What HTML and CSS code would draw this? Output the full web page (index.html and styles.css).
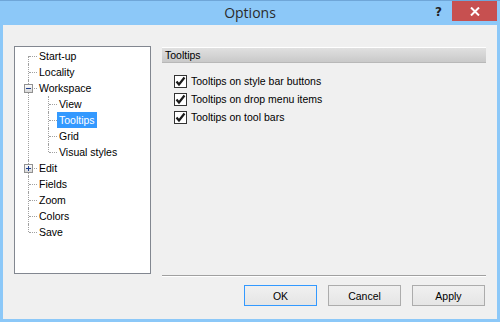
FILE: index.html
```html
<!DOCTYPE html>
<html lang="en">
<head>
<meta charset="UTF-8">
<title>Options</title>
<link rel="stylesheet" href="styles.css">
</head>
<body>
<div class="window">
    <div class="titlebar">
        <div class="spacer"></div>
        <div class="title">Options</div>
        <div class="controls">
            <span class="help">?</span>
            <span class="close">
                <svg width="10" height="9" viewBox="0 0 10 9"><path d="M1 0.5 L9 8.5 M9 0.5 L1 8.5" stroke="#fff" stroke-width="2"/></svg>
            </span>
        </div>
    </div>

    <div class="content">
        <!-- Category tree -->
        <div class="tree">
            <ul>
                <li><span class="label">Start-up</span></li>
                <li><span class="label">Locality</span></li>
                <li>
                    <span class="expander minus"></span>
                    <span class="label">Workspace</span>
                    <ul>
                        <li><span class="label">View</span></li>
                        <li><span class="label selected">Tooltips</span></li>
                        <li><span class="label">Grid</span></li>
                        <li><span class="label">Visual styles</span></li>
                    </ul>
                </li>
                <li>
                    <span class="expander plus"></span>
                    <span class="label">Edit</span>
                </li>
                <li><span class="label">Fields</span></li>
                <li><span class="label">Zoom</span></li>
                <li><span class="label">Colors</span></li>
                <li><span class="label">Save</span></li>
            </ul>
        </div>

        <div class="right">
            <div class="panel">
                <div class="panel-header">Tooltips</div>
                <div class="checks">
                    <label class="check"><span class="box"><svg width="11" height="11" viewBox="0 0 11 11"><path d="M1.5 5.5 L4 8.5 L9.5 1.5" fill="none" stroke="#1a1a1a" stroke-width="2.2"/></svg></span>Tooltips on style bar buttons</label>
                    <label class="check"><span class="box"><svg width="11" height="11" viewBox="0 0 11 11"><path d="M1.5 5.5 L4 8.5 L9.5 1.5" fill="none" stroke="#1a1a1a" stroke-width="2.2"/></svg></span>Tooltips on drop menu items</label>
                    <label class="check"><span class="box"><svg width="11" height="11" viewBox="0 0 11 11"><path d="M1.5 5.5 L4 8.5 L9.5 1.5" fill="none" stroke="#1a1a1a" stroke-width="2.2"/></svg></span>Tooltips on tool bars</label>
                </div>
            </div>
            <div class="separator"></div>
            <div class="buttons">
                <button class="default">OK</button>
                <button>Cancel</button>
                <button>Apply</button>
            </div>
        </div>
    </div>
</div>
</body>
</html>
```

FILE: styles.css
```css
body {
    margin: 0;
    background: #8cc8f8;
    font-family: 'Liberation Sans', Arial, sans-serif;
    font-size: 10.5px;
    color: #000;
}

.window {
    width: 500px;
    height: 322px;
    box-sizing: border-box;
    background: #8cc8f8;
    border-top: 1px solid #6fa6d8;
    padding: 0 3px 3px 3px;
}

.titlebar {
    height: 24px;
    display: flex;
    align-items: flex-start;
}

.spacer {
    width: 62px;
}

.title {
    flex: 1;
    text-align: center;
    font-family: 'Open Sans', sans-serif;
    font-size: 14px;
    line-height: 24px;
    color: #2b2b2b;
}

.controls {
    width: 62px;
    display: flex;
    align-items: flex-start;
}

.help {
    width: 17px;
    font-family: 'DejaVu Sans', sans-serif;
    font-weight: bold;
    font-size: 12px;
    line-height: 23px;
    color: #222;
}

.close {
    width: 45px;
    height: 20px;
    background: #c75050;
    display: flex;
    align-items: center;
    justify-content: center;
}

.content {
    height: 294px;
    box-sizing: border-box;
    background: #f0f0f0;
    padding: 21px 11px 0 11px;
    display: grid;
    grid-template-columns: 137px 1fr;
    column-gap: 11px;
    align-items: start;
}

/* tree view */
.tree {
    height: 228px;
    box-sizing: border-box;
    background: #fff;
    border: 1px solid #828790;
    padding-top: 1px;
}

.tree ul {
    list-style: none;
    margin: 0;
    padding: 0;
}

.tree li {
    position: relative;
    padding-left: 22px;
}

.tree li::before {
    content: '';
    position: absolute;
    left: 14px;
    top: 8px;
    width: 8px;
    border-top: 1px dotted #a0a0a0;
}

.tree li::after {
    content: '';
    position: absolute;
    left: 13px;
    top: 0;
    bottom: 0;
    border-left: 1px dotted #a0a0a0;
}

.tree > ul > li:first-child::after {
    top: 8px;
}

.tree li:last-child::after {
    bottom: auto;
    height: 8px;
}

.tree ul ul {
    margin-left: -2px;
}

.label {
    display: inline-block;
    height: 16px;
    line-height: 16px;
    padding: 0 2px;
}

.label.selected {
    background: #3399ff;
    color: #fff;
}

.expander {
    position: absolute;
    z-index: 1;
    left: 9px;
    top: 4px;
    width: 9px;
    height: 9px;
    box-sizing: border-box;
    border: 1px solid #919191;
    background: linear-gradient(#fcfcfc, #d8d8d8);
}

.expander::before {
    content: '';
    position: absolute;
    left: 1px;
    top: 3px;
    width: 5px;
    height: 1px;
    background: #1e3e8c;
}

.expander.plus::after {
    content: '';
    position: absolute;
    left: 3px;
    top: 1px;
    width: 1px;
    height: 5px;
    background: #1e3e8c;
}

/* right side */
.right {
    display: flex;
    flex-direction: column;
}

.panel {
    height: 229px;
    padding-top: 1px;
    box-sizing: border-box;
}

.panel-header {
    height: 16px;
    box-sizing: border-box;
    border-top: 1px solid #fff;
    border-bottom: 1px solid #b8b8b8;
    background: linear-gradient(#e0e0e0, #c9c9c9);
    padding-left: 3px;
    line-height: 14px;
}

.checks {
    margin-top: 9px;
    padding-left: 12px;
}

.check {
    display: flex;
    align-items: center;
    height: 18px;
}

.box {
    width: 13px;
    height: 13px;
    box-sizing: border-box;
    border: 1px solid #333;
    background: #fff;
    margin-right: 4px;
    display: flex;
    align-items: center;
    justify-content: center;
}

.separator {
    height: 1px;
    background: #a0a0a0;
    border-bottom: 1px solid #fff;
}

.buttons {
    margin-top: 8px;
    display: flex;
    justify-content: flex-end;
    gap: 11px;
    padding-right: 1px;
}

.buttons button {
    width: 73px;
    height: 21px;
    font-family: 'Liberation Sans', Arial, sans-serif;
    font-size: 10.5px;
    color: #000;
    border: 1px solid #acacac;
    background: linear-gradient(#f0f0f0, #e5e5e5);
    padding: 0;
}

.buttons button.default {
    border-color: #3399ff;
}
```
